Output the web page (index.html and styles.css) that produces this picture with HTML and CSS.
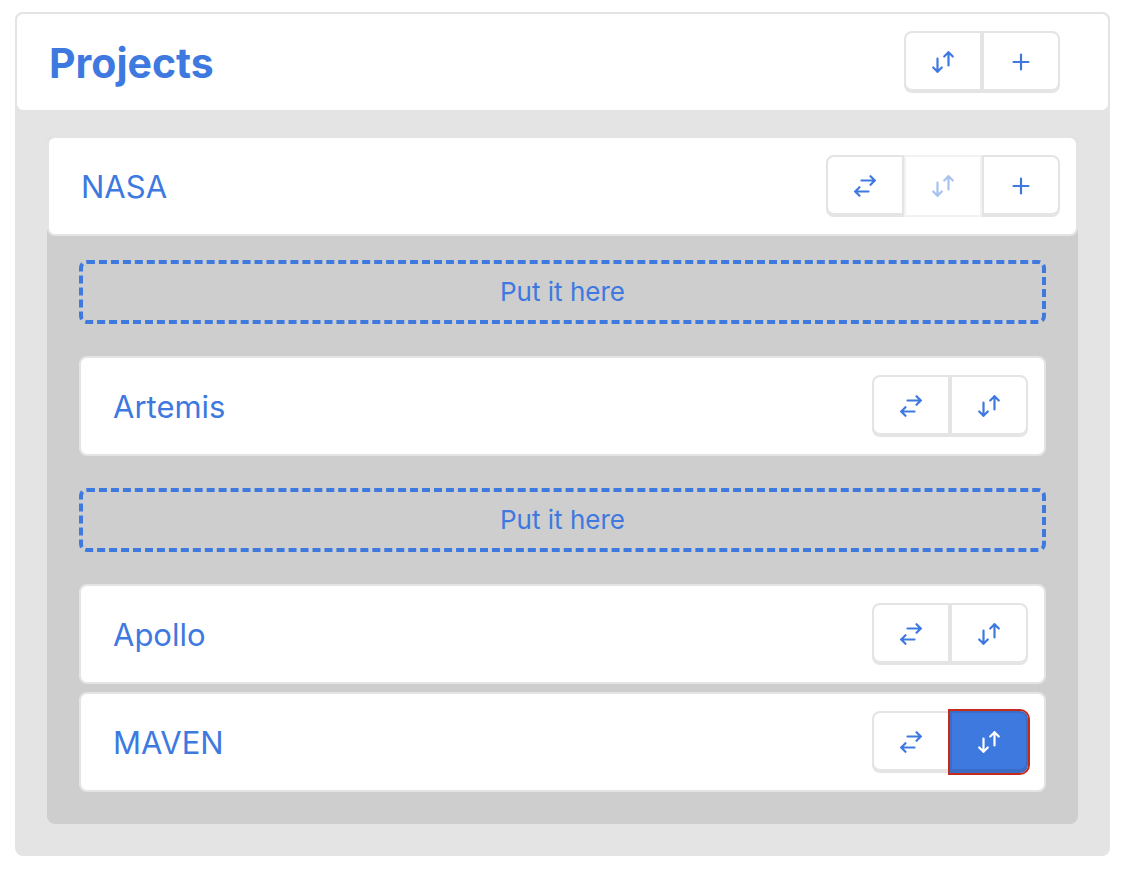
FILE: index.html
```html
<!DOCTYPE html>
<html lang="en">
<head>
  <meta charset="UTF-8">
  <meta name="viewport" content="width=device-width, initial-scale=1">
  <title>Projects</title>
  <link rel="stylesheet" href="styles.css">
</head>
<body>

  <!-- Shared icons -->
  <svg class="icon-defs" aria-hidden="true">
    <symbol id="icon-sort" viewBox="0 0 24 24">
      <path d="M6.5 8.5V22M2.2 17.5L6.5 21.8L10.8 17.5M17.5 15.5V2M13.2 6.5L17.5 2.2L21.8 6.5"/>
    </symbol>
    <symbol id="icon-move" viewBox="0 0 24 24">
      <path d="M8.5 6.5H22M17.5 2.2L21.8 6.5L17.5 10.8M15.5 17.5H2M6.5 13.2L2.2 17.5L6.5 21.8"/>
    </symbol>
    <symbol id="icon-plus" viewBox="0 0 24 24">
      <path d="M12 4.5V19.5M4.5 12H19.5"/>
    </symbol>
  </svg>

  <main class="tree">
    <div class="card card-root">
      <h1 class="title">Projects</h1>
      <div class="actions">
        <button class="btn" type="button" aria-label="Sort projects"><svg class="icon"><use href="#icon-sort"/></svg></button>
        <button class="btn" type="button" aria-label="Add project"><svg class="icon"><use href="#icon-plus"/></svg></button>
      </div>
    </div>

    <section class="group">
      <div class="card">
        <h2 class="name">NASA</h2>
        <div class="actions">
          <button class="btn" type="button" aria-label="Move NASA"><svg class="icon"><use href="#icon-move"/></svg></button>
          <button class="btn" type="button" aria-label="Sort NASA" disabled><svg class="icon"><use href="#icon-sort"/></svg></button>
          <button class="btn" type="button" aria-label="Add to NASA"><svg class="icon"><use href="#icon-plus"/></svg></button>
        </div>
      </div>

      <div class="items">
        <button class="drop-target" type="button">Put it here</button>

        <div class="card">
          <h3 class="name">Artemis</h3>
          <div class="actions">
            <button class="btn" type="button" aria-label="Move Artemis"><svg class="icon"><use href="#icon-move"/></svg></button>
            <button class="btn" type="button" aria-label="Sort Artemis"><svg class="icon"><use href="#icon-sort"/></svg></button>
          </div>
        </div>

        <button class="drop-target" type="button">Put it here</button>

        <div class="card">
          <h3 class="name">Apollo</h3>
          <div class="actions">
            <button class="btn" type="button" aria-label="Move Apollo"><svg class="icon"><use href="#icon-move"/></svg></button>
            <button class="btn" type="button" aria-label="Sort Apollo"><svg class="icon"><use href="#icon-sort"/></svg></button>
          </div>
        </div>

        <div class="card">
          <h3 class="name">MAVEN</h3>
          <div class="actions">
            <button class="btn" type="button" aria-label="Move MAVEN"><svg class="icon"><use href="#icon-move"/></svg></button>
            <button class="btn active" type="button" aria-label="Sort MAVEN" aria-pressed="true"><svg class="icon"><use href="#icon-sort"/></svg></button>
          </div>
        </div>
      </div>
    </section>
  </main>

</body>
</html>
```
FILE: styles.css
```css
* {
  box-sizing: border-box;
}

body {
  margin: 12px 22px 20px 15px;
  background-color: #fff;
  color: #3e79e0;
  font-family: Inter, sans-serif;
}

.icon-defs {
  display: none;
}

.tree {
  padding-bottom: 32px;
  background-color: #e4e4e4;
  border-radius: 8px;
}

.card {
  display: flex;
  align-items: center;
  justify-content: space-between;
  padding: 17px 16px 17px 32px;
  background-color: #fff;
  border: 2px solid #e4e4e4;
  border-radius: 8px;
}

.card-root {
  padding-right: 48px;
}

.title {
  margin: 0;
  padding-top: 2px;
  font-size: 41px;
  font-weight: 700;
  line-height: 48px;
}

.name {
  margin: 0;
  padding-top: 2px;
  font-size: 31px;
  font-weight: 400;
  line-height: 40px;
}

.group {
  margin: 24px 32px 0;
  background-color: #cecece;
  border-radius: 8px;
}

.items {
  display: flex;
  flex-direction: column;
  gap: 8px;
  padding: 24px 32px 32px;
}

.drop-target {
  height: 64px;
  margin-bottom: 24px;
  padding: 0;
  background: none;
  border: 4px dashed #3e79e0;
  border-radius: 8px;
  color: inherit;
  font-family: inherit;
  font-size: 26px;
  line-height: 32px;
  cursor: pointer;
}

.card + .drop-target {
  margin-top: 24px;
}

.actions {
  display: flex;
}

.btn {
  display: flex;
  align-items: center;
  justify-content: center;
  width: 78px;
  height: 62px;
  padding: 0;
  background-color: #fff;
  border: 2px solid #e4e4e4;
  box-shadow: inset 0 -2px #e4e4e4;
  color: inherit;
  cursor: pointer;
}

.btn:first-child {
  border-radius: 8px 0 0 8px;
}

.btn:last-child {
  border-radius: 0 8px 8px 0;
}

.btn:disabled {
  box-shadow: none;
  opacity: 0.45;
  cursor: default;
}

.btn.active {
  background-color: #3e79e0;
  border-color: #3b6dc6;
  box-shadow: inset 0 -2px #3b6dc6;
  outline: 2px solid #c42b1c;
  color: #fff;
}

.icon {
  width: 24px;
  height: 24px;
  fill: none;
  stroke: currentColor;
  stroke-width: 2.2;
  stroke-linecap: round;
  stroke-linejoin: round;
}
```
